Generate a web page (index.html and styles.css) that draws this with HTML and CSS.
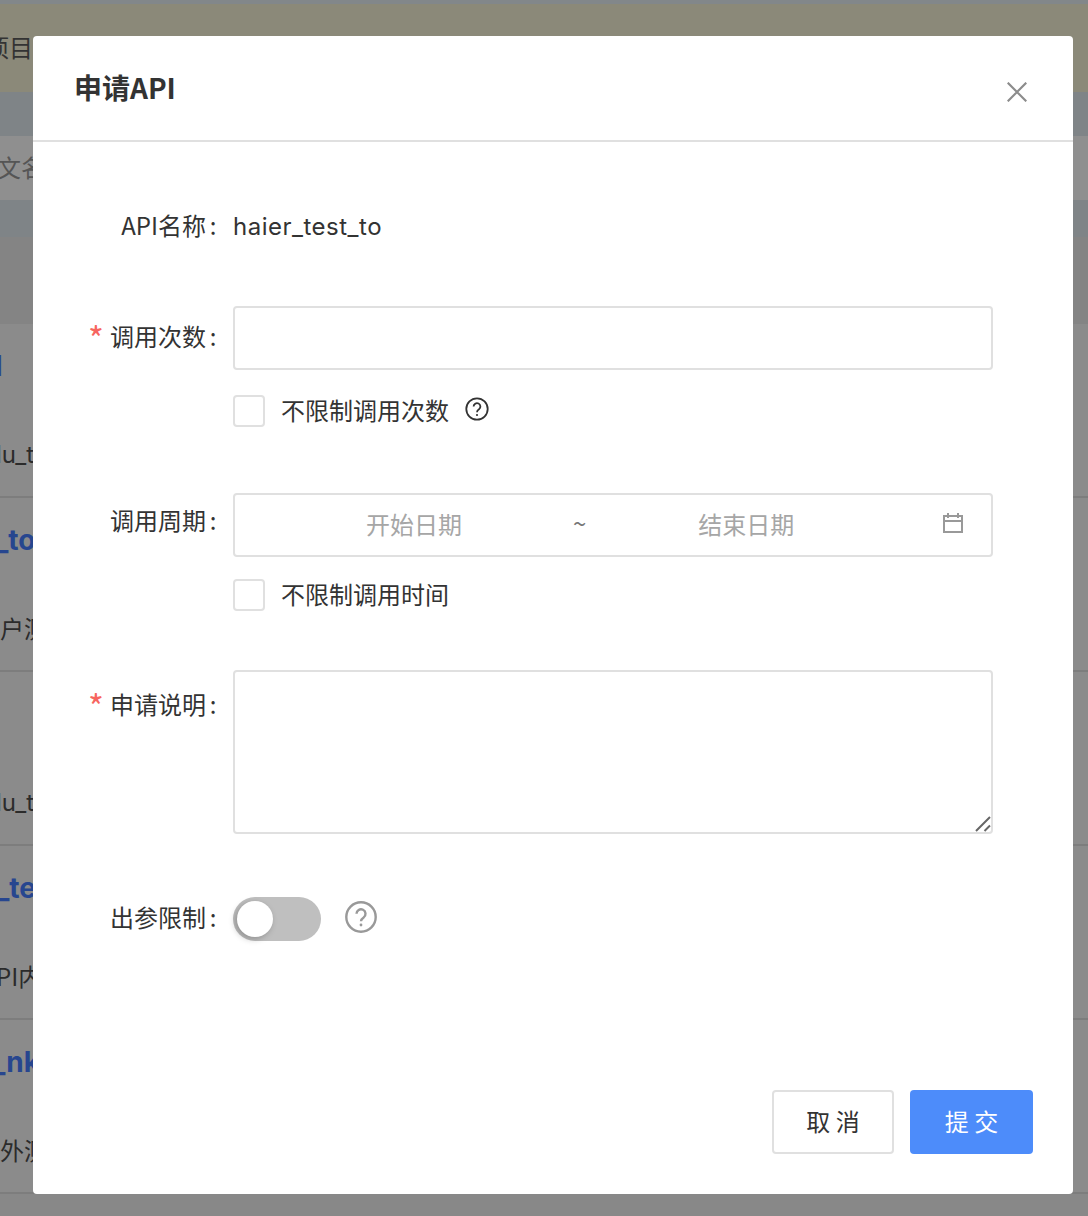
FILE: index.html
```html
<!DOCTYPE html>
<html lang="zh-CN">
<head>
<meta charset="utf-8">
<title>申请API</title>
<link rel="stylesheet" href="styles.css">
</head>
<body>
<div class="page">
  <div class="notice"><span class="notice-text">项目无</span></div>
  <div class="gap-a"></div>
  <div class="search"><span class="search-text">文名</span></div>
  <div class="gap-b"></div>
  <div class="api-row">
    <div class="api-name api-first">l</div>
    <div class="api-desc desc-code">lu_t</div>
  </div>
  <div class="api-row">
    <div class="api-name name-to">_to</div>
    <div class="api-desc">户测</div>
  </div>
  <div class="api-row">
    <div class="api-name"></div>
    <div class="api-desc desc-code">lu_t</div>
  </div>
  <div class="api-row">
    <div class="api-name name-te">_te</div>
    <div class="api-desc desc-pi">PI内</div>
  </div>
  <div class="api-row">
    <div class="api-name name-nk">_nk</div>
    <div class="api-desc">外测</div>
  </div>
</div>

<div class="overlay">
  <div class="modal">
    <header class="modal-header">
      <h2 class="modal-title">申请API</h2>
      <svg class="close-icon" viewBox="0 0 20 20" aria-label="关闭"><path d="M0.7 0.7 19.3 19.3M19.3 0.7 0.7 19.3"/></svg>
    </header>
    <form class="form">
      <div class="field field-name">
        <label class="field-label">API名称<span class="colon">:</span></label>
        <div class="field-control name-value">haier_test_to</div>
      </div>
      <div class="field field-count">
        <label class="field-label"><span class="required">*</span>调用次数<span class="colon">:</span></label>
        <div class="field-control">
          <div class="input"></div>
          <div class="check-row">
            <span class="checkbox"></span>
            <span class="check-label">不限制调用次数</span>
            <svg class="help help-small" viewBox="0 0 24 24"><circle cx="12" cy="12" r="10.700"/><path d="M8.600 9.600a3.400 3.400 0 1 1 5.400 2.700c-1.200.8-2 1.400-2 2.900"/><circle class="dot" cx="12" cy="18" r="1.100"/></svg>
          </div>
        </div>
      </div>
      <div class="field field-period">
        <label class="field-label">调用周期<span class="colon">:</span></label>
        <div class="field-control">
          <div class="input range">
            <span class="range-text range-start">开始日期</span>
            <span class="range-sep">~</span>
            <span class="range-text range-end">结束日期</span>
            <svg class="calendar" viewBox="0 0 20 20"><path d="M1 3h18v16H1zM1 8h18M5 0v5M15 0v5"/></svg>
          </div>
          <div class="check-row">
            <span class="checkbox"></span>
            <span class="check-label">不限制调用时间</span>
          </div>
        </div>
      </div>
      <div class="field field-desc">
        <label class="field-label"><span class="required">*</span>申请说明<span class="colon">:</span></label>
        <div class="field-control">
          <div class="input textarea">
            <svg class="resizer" viewBox="0 0 16 16"><path d="M1 15 15 1M9.500 15 15 9.500"/></svg>
          </div>
        </div>
      </div>
      <div class="field field-switch">
        <label class="field-label">出参限制<span class="colon">:</span></label>
        <div class="field-control switch-row">
          <span class="switch"><span class="knob"></span></span>
          <svg class="help help-large" viewBox="0 0 32 32"><circle cx="16" cy="16" r="14.700"/><path d="M11.500 12.800a4.500 4.500 0 1 1 7.200 3.600c-1.700 1.100-2.700 1.900-2.700 3.800"/><circle class="dot" cx="16" cy="24" r="1.400"/></svg>
        </div>
      </div>
    </form>
    <footer class="modal-footer">
      <button class="btn btn-cancel" type="button">取 消</button>
      <button class="btn btn-submit" type="button">提 交</button>
    </footer>
  </div>
</div>
</body>
</html>
```
FILE: styles.css
```css
* { box-sizing: border-box; }
html, body { margin: 0; padding: 0; }
body {
  width: 1088px;
  height: 1216px;
  overflow: hidden;
  position: relative;
  background: #888888;
  font-family: "Noto Sans CJK SC", "Noto Sans", sans-serif;
  color: #333333;
}

/* dimmed page behind the dialog */
.page { height: 1216px; padding-top: 4px; background: linear-gradient(#82878a 4px, #888888 4px); overflow: hidden; }
.notice { height: 88px; background: #8b8979; font-size: 24px; line-height: 86px; white-space: nowrap; color: #333; }
.notice-text { display: block; margin-left: -15px; }
.gap-a { height: 44px; background: #7f8487; }
.search { height: 64px; background: #8f8f8f; font-size: 24px; line-height: 62px; color: #555; white-space: nowrap; }
.search-text { display: block; margin-left: -3px; }
.gap-b { height: 124px; background: linear-gradient(#7f8487 37px, #848484 37px); }
.api-row {
  height: 174px;
  background: #8b8b8b;
  border-bottom: 2px solid #7d7d7d;
  white-space: nowrap;
  overflow: hidden;
}
.api-name { height: 114px; padding-top: 24px; font-family: Inter, sans-serif; font-size: 28px; line-height: 36px; font-weight: 700; color: #27468f; }
.api-first { margin-left: -5px; }
.name-to { margin-left: -5px; }
.name-te { margin-left: -4px; }
.name-nk { margin-left: -8px; }
.api-desc { font-size: 24px; line-height: 32px; color: #2b2b2b; }
.desc-code { font-family: Inter, sans-serif; margin-left: -4px; padding-top: 1px; }
.desc-pi { margin-left: -4px; }

/* dialog */
.overlay { position: absolute; inset: 0; }
.modal {
  position: absolute;
  left: 33px;
  top: 36px;
  width: 1040px;
  height: 1158px;
  background: #ffffff;
  border-radius: 4px;
  display: flex;
  flex-direction: column;
}
.modal-header {
  height: 106px;
  flex: none;
  border-bottom: 2px solid #e0e0e0;
  padding: 0 46px 0 41px;
  display: flex;
  justify-content: space-between;
}
.modal-title { margin: 31px 0 0; font-size: 28px; line-height: 40px; font-weight: 700; color: #333; }
.close-icon { width: 20px; height: 20px; margin-top: 46px; fill: none; stroke: #8c8c8c; stroke-width: 2.200; }

.form { flex: 1; }
.field { display: flex; }
.field-label {
  width: 200px;
  flex: none;
  padding-right: 13px;
  text-align: right;
  font-size: 24px;
  color: #333;
  white-space: nowrap;
}
.colon { display: inline-block; width: 14px; text-align: center; }
.required { color: #f76560; margin-right: 6px; font-size: 34px; line-height: 0; vertical-align: -6px; }
.field-control { width: 760px; }
.field-name { margin-top: 66px; height: 40px; }
.field-name .field-label { line-height: 34px; }
.name-value { font-family: Inter, sans-serif; font-size: 24px; line-height: 38px; letter-spacing: .5px; color: #333; }
.field-count { margin-top: 58px; }
.field-count .field-label { line-height: 60px; }
.field-period .field-label { line-height: 54px; }
.field-period { margin-top: 66px; }
.field-desc { margin-top: 59px; }
.field-desc .field-label { line-height: 68px; }
.field-switch { margin-top: 63px; }
.field-switch .field-label { line-height: 40px; }

.input { height: 64px; border: 2px solid #e0e0e0; border-radius: 4px; background: #fff; }
.check-row { display: flex; align-items: center; height: 32px; margin-top: 25px; }
.field-period .check-row { margin-top: 22px; }
.checkbox { width: 32px; height: 32px; border: 2px solid #e0e0e0; border-radius: 4px; flex: none; }
.check-label { margin: 0 0 4px 16px; font-size: 24px; color: #333; white-space: nowrap; }
.help { fill: none; stroke: #333; }
.help .dot { fill: #333; stroke: none; }
.help-small { width: 24px; height: 24px; margin: 0 0 4px 16px; stroke-width: 1.800; }
.help-large { width: 32px; height: 32px; margin: 0 0 4px 24px; stroke: #999; stroke-width: 2.400; }
.help-large .dot { fill: #999; }

.range { display: flex; align-items: center; position: relative; font-size: 24px; color: #a6a6a6; }
.range-text { white-space: nowrap; margin-bottom: 4px; }
.range-start { margin-left: 131px; }
.range-sep { margin: 0 0 6px 111px; color: #777; }
.range-end { margin-left: 112px; }
.calendar { width: 20px; height: 20px; margin: 0 28px 4px auto; fill: none; stroke: #999; stroke-width: 2; }

.textarea { height: 164px; position: relative; }
.resizer { position: absolute; right: 0; bottom: 0; width: 16px; height: 16px; fill: none; stroke: #666; stroke-width: 2; }

.switch-row { display: flex; align-items: center; }
.switch { width: 88px; height: 44px; border-radius: 22px; background: #bfbfbf; position: relative; flex: none; }
.knob {
  position: absolute;
  left: 4px;
  top: 4px;
  width: 36px;
  height: 36px;
  border-radius: 50%;
  background: #fff;
  box-shadow: -2px 2px 6px rgba(0,0,0,.25);
}

.modal-footer { flex: none; display: flex; justify-content: flex-end; gap: 16px; padding: 0 40px 40px; }
.btn {
  height: 64px;
  border-radius: 4px;
  font-family: inherit;
  font-size: 24px;
  padding: 0 0 4px;
}
.btn-cancel { width: 122px; background: #fff; border: 2px solid #e0e0e0; color: #333; }
.btn-submit { width: 123px; background: #4d8cfa; border: 0; color: #fff; }
```
